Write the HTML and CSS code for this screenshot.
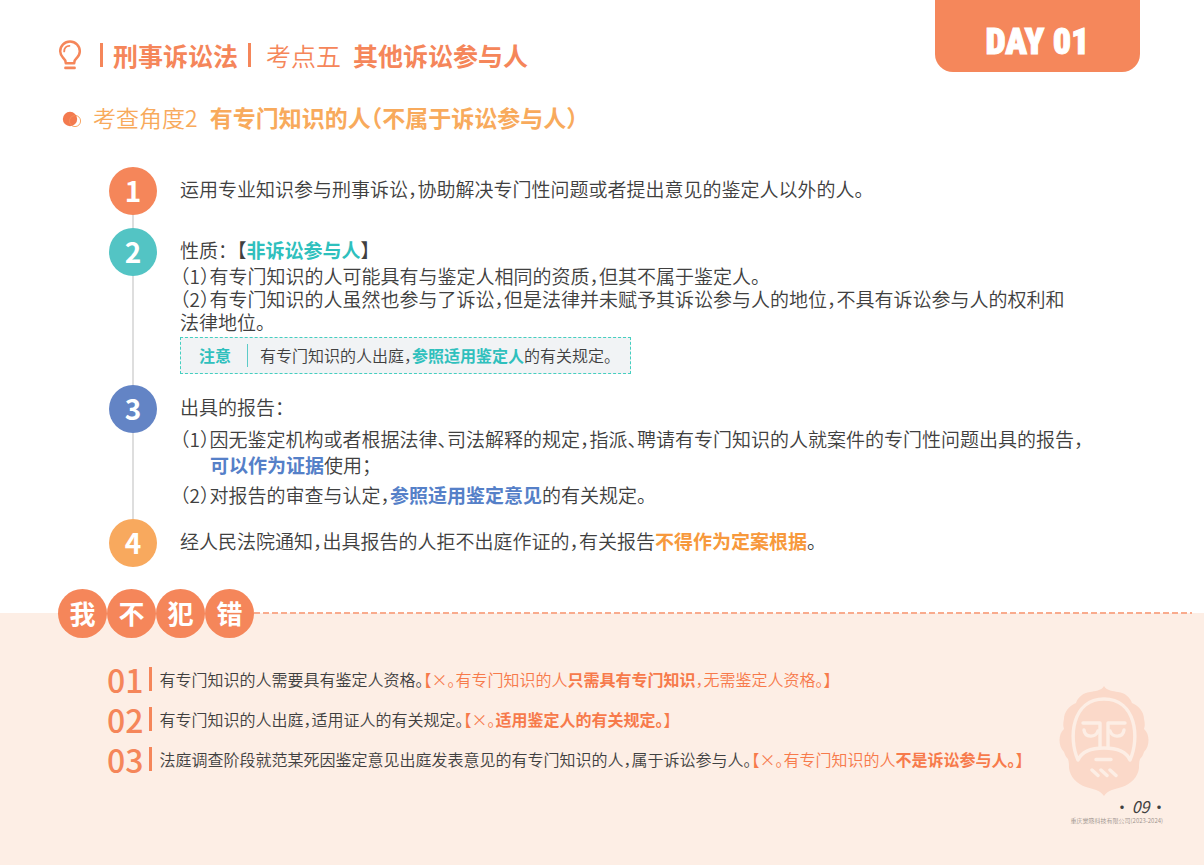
FILE: index.html
```html
<!DOCTYPE html>
<html lang="zh-CN">
<head>
<meta charset="utf-8">
<meta name="viewport" content="width=device-width, initial-scale=1">
<title>刑事诉讼法 考点五 其他诉讼参与人</title>
<link rel="stylesheet" href="styles.css">
</head>
<body>
<header class="head">
  <div class="titles">
    <h1 class="title">
      <svg class="bulb" viewBox="0 0 24 30" aria-hidden="true">
        <path d="M7.800 23.200c0-2.200-.9-3.800-2.700-5.400A9.700 9.700 0 0 1 2.200 11.200a9.800 9.800 0 0 1 19.600 0c0 2.600-1.100 4.900-2.900 6.600-1.800 1.600-2.700 3.200-2.700 5.400z" fill="none" stroke="#f5865a" stroke-width="2.500" stroke-linejoin="round"/>
        <path d="M6.200 11.400c0-3.100 2.200-5.400 5.200-5.500" fill="none" stroke="#f5865a" stroke-width="1.900" stroke-linecap="round"/>
        <path d="M7.400 27.900h9.200" stroke="#f5865a" stroke-width="2.600" stroke-linecap="round"/>
      </svg>
      <span class="subject">刑事诉讼法</span>
      <span class="thin">考点五</span>
      <span>其他诉讼参与人</span>
    </h1>
    <h2 class="angle">
      <svg class="dot" viewBox="0 0 20 17" aria-hidden="true">
        <circle cx="13" cy="10" r="5.600" fill="none" stroke="#f8a868" stroke-width="1"/>
        <circle cx="8" cy="8" r="7.200" fill="#f37a4e"/>
        <path d="M13 4.400a5.600 5.600 0 0 0-3 10.300" fill="none" stroke="#f58f5c" stroke-width="1"/>
      </svg>
      <span class="thin">考查角度2</span>
      <span>有专门知识的人（不属于诉讼参与人）</span>
    </h2>
  </div>
  <div class="day">DAY 01</div>
</header>

<main class="main">
  <ol class="steps">
    <li class="step">
      <span class="num num-1">1</span>
      <div class="text"><p>运用专业知识参与刑事诉讼，协助解决专门性问题或者提出意见的鉴定人以外的人。</p></div>
    </li>
    <li class="step">
      <span class="num num-2">2</span>
      <div class="text">
        <p>性质<span class="full">：</span>【<b class="teal">非诉讼参与人</b>】</p>
        <div class="tight">
          <p>（1）有专门知识的人可能具有与鉴定人相同的资质，但其不属于鉴定人。</p>
          <p>（2）有专门知识的人虽然也参与了诉讼，但是法律并未赋予其诉讼参与人的地位，不具有诉讼参与人的权利和<br>法律地位。</p>
        </div>
        <div class="note">
          <b class="note-label">注意</b>
          <p class="note-text">有专门知识的人出庭，<b class="teal">参照适用鉴定人</b>的有关规定。</p>
        </div>
      </div>
    </li>
    <li class="step">
      <span class="num num-3">3</span>
      <div class="text">
        <p>出具的报告：</p>
        <p class="clause">（1）因无鉴定机构或者根据法律、司法解释的规定，指派、聘请有专门知识的人就案件的专门性问题出具的报告，<br><b class="blue">可以作为证据</b>使用；</p>
        <p class="clause clause-next">（2）对报告的审查与认定，<b class="blue">参照适用鉴定意见</b>的有关规定。</p>
      </div>
    </li>
    <li class="step">
      <span class="num num-4">4</span>
      <div class="text"><p>经人民法院通知，出具报告的人拒不出庭作证的，有关报告<b class="amber">不得作为定案根据</b>。</p></div>
    </li>
  </ol>
</main>

<section class="errors">
  <div class="banner">
    <h2 class="badges"><span>我</span><span>不</span><span>犯</span><span>错</span></h2>
    <span class="dash"></span>
  </div>
  <div class="errors-body">
    <ol class="list">
      <li class="entry"><span class="index">01</span><p>有专门知识的人需要具有鉴定人资格。<span class="fix">【×。有专门知识的人<b>只需具有专门知识</b>，无需鉴定人资格。】</span></p></li>
      <li class="entry"><span class="index">02</span><p>有专门知识的人出庭，适用证人的有关规定。<span class="fix">【×。<b>适用鉴定人的有关规定。</b>】</span></p></li>
      <li class="entry"><span class="index">03</span><p>法庭调查阶段就范某死因鉴定意见出庭发表意见的有专门知识的人，属于诉讼参与人。<span class="fix">【×。有专门知识的人<b>不是诉讼参与人。</b>】</span></p></li>
    </ol>
    <footer class="foot">
      <svg class="face" viewBox="0 0 90 112" aria-hidden="true">
        <path d="M45 1C48 6 54 6 59 7c7 1 12 5 14 11 7 3 12 9 12 16 1 4 1 7 0 10 6 5 6 17 0 23-1 3-2 5-4 7-1 3-1 6-1 9-1 9-8 16-17 19-7 2-14 3-18 9-4-6-11-7-18-9-9-3-16-10-17-19 0-3 0-6-1-9-2-2-3-4-4-7-6-6-6-18 0-23-1-3-1-6 0-10 0-7 5-13 12-16 2-6 7-10 14-11C36 6 42 6 45 1z" fill="#fbd9c9"/>
        <g fill="none" stroke="#fdeee5" stroke-width="3.400" stroke-linecap="round" stroke-linejoin="round">
          <path d="M19 75C9 53 13 14 45 14c32 0 36 39 26 61-4-9-15-12-26-12s-22 3-26 12z"/>
          <path d="M24 38h17v24M66 38H49v24"/>
          <path d="M25 45c1 8 12 8 14 1M51 46c2 7 13 7 14-1"/>
          <path d="M37 74.500h15M33 85l6 5.500M42 85l6 5.500M51 85l6 5.500"/>
        </g>
      </svg>
      <p class="page">• <i>09</i> •</p>
      <p class="legal">重庆觉晓科技有限公司(2023-2024)</p>
    </footer>
  </div>
</section>
</body>
</html>
```

FILE: styles.css
```css
* { box-sizing: border-box; }

body {
  margin: 0;
  min-height: 100vh;
  display: flex;
  flex-direction: column;
  background: #fff;
  color: #404040;
  font-family: "Noto Sans CJK SC", "Noto Sans", sans-serif;
  font-size: 19px;
  font-weight: 350;
  font-feature-settings: "halt";
  text-spacing-trim: space-all;
}

h1, h2, p, ol { margin: 0; padding: 0; }
ol { list-style: none; }
b { font-weight: 700; }
.full { font-feature-settings: "halt" 0; }
.thin { font-weight: 350; }
.teal { color: #2fc0bd; }
.blue { color: #5580c8; }
.amber { color: #f7993c; }

.head {
  display: flex;
  justify-content: space-between;
  align-items: flex-start;
  padding: 0 64px 0 58px;
}

.titles { padding-top: 37px; }

.title {
  display: flex;
  align-items: center;
  height: 36px;
  color: #f5865a;
  font-size: 25px;
  line-height: 36px;
}

.bulb { width: 24px; height: 30px; margin-right: 18px; }

.subject {
  display: flex;
  align-items: center;
  gap: 10px;
  margin-right: 15px;
}

.subject::before,
.subject::after {
  content: "";
  width: 3px;
  height: 24px;
  background: currentColor;
}

.title .thin { margin-right: 12px; }

.angle {
  display: flex;
  align-items: center;
  height: 34px;
  margin-top: 27px;
  padding-left: 4px;
  color: #f8aa5c;
  font-size: 23px;
  line-height: 34px;
}

.dot { width: 20px; height: 17px; margin: 5px 11px 0 0; }
.angle .thin { margin-right: 12px; }

.day {
  width: 205px;
  height: 72px;
  padding-top: 18px;
  border-radius: 0 0 18px 18px;
  background: #f5875b;
  color: #fff;
  font-family: "Liberation Sans Narrow", "Roboto Condensed", "DejaVu Sans Condensed", sans-serif;
  font-size: 36px;
  font-weight: 900;
  line-height: 48px;
  text-align: center;
  -webkit-text-stroke: 1px #fff;
}

.main { padding: 33px 64px 10px 109px; }

.step {
  position: relative;
  display: flex;
  gap: 23px;
  padding-bottom: 13px;
}

.step:nth-child(n + 2) { padding-bottom: 11px; }

.step:not(:last-child)::before {
  content: "";
  position: absolute;
  top: 0;
  bottom: 0;
  left: 23px;
  width: 2px;
  background: #dedede;
}

.num {
  position: relative;
  flex: none;
  width: 48px;
  height: 48px;
  border-radius: 50%;
  color: #fff;
  font-size: 28px;
  font-weight: 700;
  line-height: 46px;
  text-align: center;
}

.num-1 { background: #f5865a; }
.num-2 { background: #53c4c4; }
.num-3 { background: #6384c5; }
.num-4 { background: #f8a95e; }

.text { flex: 1; padding-top: 9px; line-height: 26px; }
.tight { margin-top: 1px; line-height: 23px; }

.note {
  display: inline-flex;
  align-items: center;
  margin-top: 4px;
  padding: 6px 18px;
  border: 1px dashed #45cfc0;
  background: #f1f3f5;
  font-size: 16px;
  line-height: 23px;
  vertical-align: top;
}

.note-label {
  padding-right: 16px;
  border-right: 1px solid #5ccbc8;
  color: #2fc0bd;
}

.note-text { padding-left: 12px; }

.clause {
  margin-top: 6px;
  padding-left: 30px;
  text-indent: -30px;
}

.clause-next { margin-top: 4px; }

.errors { flex: 1; background: linear-gradient(#fff 25px, #fdeee5 25px); }

.banner {
  display: flex;
  align-items: center;
  height: 50px;
  padding: 0 12px 0 58px;
}

.badges { display: flex; }

.badges span {
  width: 49px;
  height: 49px;
  border-radius: 50%;
  background: #f5865a;
  color: #fff;
  font-size: 26px;
  font-weight: 700;
  line-height: 47px;
  text-align: center;
}

.dash {
  flex: 1;
  height: 2px;
  background: repeating-linear-gradient(90deg, #f9ab8d 0 6px, transparent 6px 9px);
}

.errors-body {
  display: flex;
  justify-content: space-between;
  padding: 21px 41px 32px 107px;
}

.entry {
  display: flex;
  align-items: center;
  height: 40px;
  font-size: 16px;
  line-height: 24px;
}

.index {
  display: flex;
  align-items: center;
  gap: 6px;
  margin-right: 7px;
  color: #f5865a;
  font-size: 32px;
  font-weight: 500;
  line-height: 32px;
}

.index::after {
  content: "";
  width: 3px;
  height: 24px;
  background: currentColor;
}

.fix { color: #f77a4b; }

.foot {
  display: flex;
  flex-direction: column;
  align-items: flex-end;
  padding-top: 26px;
}

.face { width: 90px; height: 112px; margin-right: 14px; }
.page { font-size: 16px; line-height: 18px; font-weight: 400; }
.page i { margin: 0 2px; }
.legal { color: #9b918c; font-size: 6px; line-height: 12px; }
```
